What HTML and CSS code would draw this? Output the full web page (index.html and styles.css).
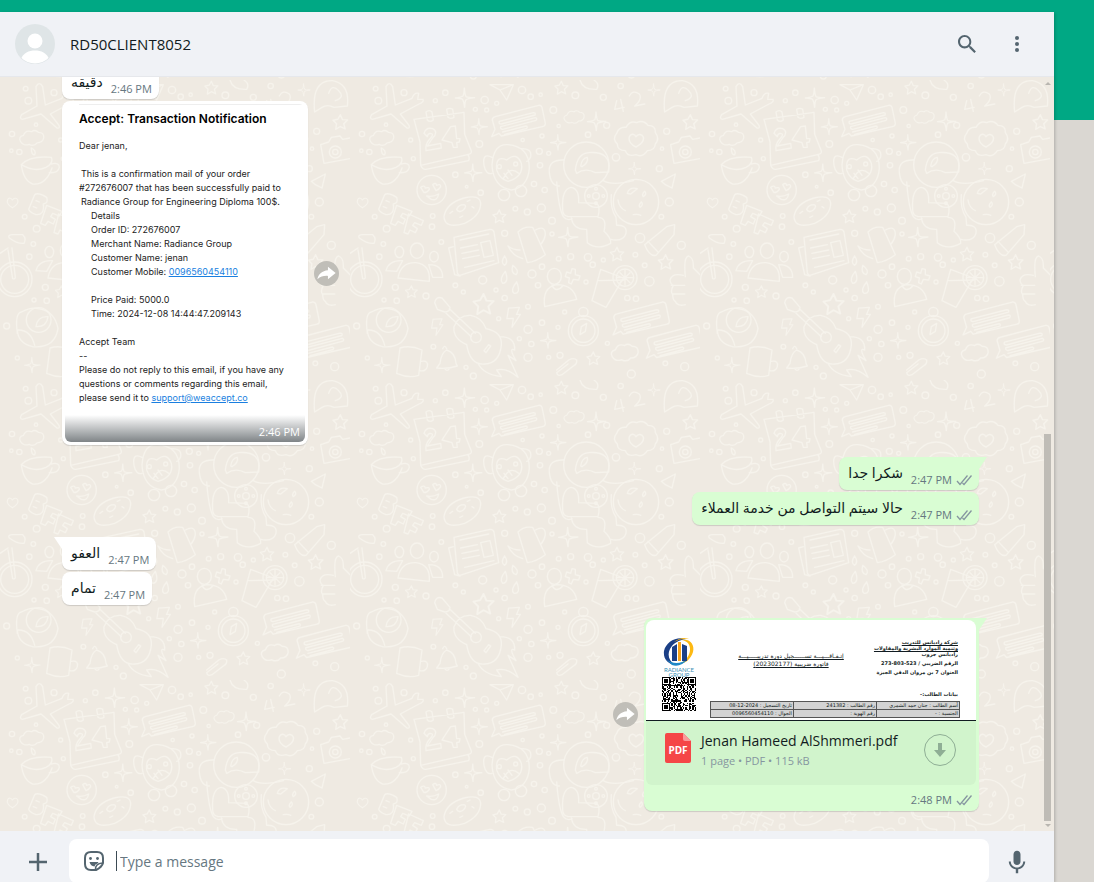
FILE: index.html
```html
<!DOCTYPE html>
<html lang="en">
<head>
  <meta charset="UTF-8" />
  <meta name="viewport" content="width=device-width, initial-scale=1.0"/>
  <title>RD50CLIENT8052</title>

  <link rel="stylesheet" href="styles.css">
</head>
<body>

  <!-- shared icons -->
  <svg class="defs" width="0" height="0" aria-hidden="true">
    <symbol id="ticks" viewBox="0 0 16 12">
      <path d="M1 7l3 3.5L11.500 1.500M6.500 9l1.500 1.500L15.500 1.500" fill="none" stroke="currentColor" stroke-width="1.300"/>
    </symbol>
    <symbol id="forward" viewBox="0 0 26 26">
      <path d="M14.500 6L22.500 12.500L14.500 19V15.500C10 15.200 7 16.200 3.500 19C4.500 13.500 8.500 10 14.500 9.500Z" fill="#fff"/>
    </symbol>
    <symbol id="star" viewBox="0 0 50 50">
      <path d="M24 4l6 14 15 1-11 11 4 15-14-7-13 8 2-16L3 20l14-3z"/>
    </symbol>
    <symbol id="spark" viewBox="0 0 60 60">
      <path d="M28 2q2 22 5 25q5 3 25 3q-22 3-25 6q-3 3-4 22q-3-20-6-23q-3-3-21-4q18-3 22-6q3-3 4-23z"/>
    </symbol>
    <symbol id="heart" viewBox="0 0 50 50">
      <path d="M24 44C10 36 2 25 6 14c4-9 15-7 18 1c5-8 16-9 20 0c4 11-8 22-20 29z"/>
    </symbol>
    <symbol id="note" viewBox="0 0 170 105">
      <path d="M18 38L148 4q8-1 10 6l10 48q0 8-6 9L36 96l-7-8-22 10 10-22-8-28q0-8 9-10zM30 52L132 26q8 0 5 7L36 60q-9 0-6-8zM34 68l104-27q7 2 2 8L40 76q-8-1-6-8zM40 84l70-18q6 2 2 7L46 91"/>
    </symbol>
    <symbol id="cloud" viewBox="0 0 90 60">
      <path d="M10 40q-8-14 9-19Q26 2 45 9q10-8 21 2q18 0 17 17q-3 16-21 16q-10 13-25 5q-18 6-27-9z"/>
    </symbol>
    <symbol id="bolt" viewBox="0 0 50 70">
      <path d="M10 5l34-2-9 22 12 0-26 40 4-28-20 1z"/>
    </symbol>
  </svg>

  <div class="band"></div>

  <main class="app">
    <header class="top">
      <svg class="avatar" viewBox="0 0 40 40" role="img" aria-label="Contact photo">
        <clipPath id="round"><circle cx="20" cy="20" r="19.500"/></clipPath>
        <circle cx="20" cy="20" r="20" fill="#dfe5e7"/>
        <g fill="#fff" clip-path="url(#round)">
          <circle cx="20" cy="17" r="7.500"/>
          <path d="M6 35c2-6 8-8.500 14-8.500s12 2.500 14 8.500q-6 5-14 5t-14-5z"/>
        </g>
      </svg>
      <h1 class="contact">RD50CLIENT8052</h1>
      <button class="icon-btn" type="button" aria-label="Search">
        <svg width="24" height="24" viewBox="0 0 24 24" fill="currentColor"><path d="M15.900 14.300H15L14.700 14c1-1.100 1.600-2.700 1.600-4.300 0-3.700-3-6.700-6.700-6.700S3 6 3 9.700s3 6.700 6.700 6.700c1.600 0 3.200-.6 4.300-1.600l.3.300v.8l5.100 5.100 1.500-1.500-5-5.200zm-6.200 0c-2.600 0-4.600-2.100-4.600-4.600s2.100-4.600 4.600-4.600 4.600 2.100 4.600 4.600-2 4.600-4.600 4.600z"/></svg>
      </button>
      <button class="icon-btn" type="button" aria-label="Menu">
        <svg width="24" height="24" viewBox="0 0 24 24" fill="currentColor"><circle cx="12" cy="6" r="2"/><circle cx="12" cy="12" r="2"/><circle cx="12" cy="18" r="2"/></svg>
      </button>
    </header>

    <section class="chat">
      <svg class="doodles" aria-hidden="true">
        <pattern id="doodle" x="0" y="3" width="350" height="300" patternUnits="userSpaceOnUse" viewBox="0 0 1050 900">
          <g fill="none" stroke="#f6f3ec" stroke-width="4" stroke-linejoin="round" stroke-linecap="round">
            <!-- plane, calendar, cup -->
            <path d="M108 20q10-18 20 0l8 55 50-20q6-18 20-15l-3 18 16 0q4 8-12 14l-56 30 26 34q4 10-6 8l-48-42-56 16q-10-2-2-14l46-26z"/>
            <path d="M192 118L342 97l2 66 20 50q2 8-8 10L212 256l-2-70zM212 256q6 14 16 12l128-26q4-8-2-18M228 96q10-8 18 0l4 24q-10 8-18 0zM290 88q10-6 18 0l4 24q-10 6-18 0z"/>
            <path d="M222 160q6-20 26-14q18 10 0 28l-16 24 40-8 2 14-46 8q-4-20 14-38q12-14-2-14q-8 2-8 10zM276 180l26-40 14-2 4 38 10 0-2 10-8 2 2 14-12 0-4-14z"/>
            <path d="M64 254q26-28 90-22q8 18-16 30q-34 16-74-8zq6 48 34 58q40 4 58-48M154 252q24-6 24 10q-4 18-30 16M94 204q16 8 10 20q-10 2-10-20z"/>
            <!-- smiley, donut, monkey -->
            <circle cx="245" cy="330" r="44"/>
            <path d="M212 322q12-8 14 2q12-4 12 4q-6 10-16 10zM248 314q10-8 12 2q12-6 12 4q-4 8-14 12zM230 348q18 4 36-6q-4 22-22 16z"/>
            <path d="M282 410q6-40 60-56q48-12 50 16q0 38-48 60q-60 18-62-20zM320 388q6-14 22-14q10 4-2 16q-14 10-20-2M300 400l8-6M352 364l8-4M366 380l6 4M330 412l8-4"/>
            <path d="M426 256q4-66 48-62q64 6 64 70q-4 58-54 66q-54-8-58-74zM426 232q-30-16-24 24q6 30 24 24M512 206q34-2 30 24q-6 14-12 14M440 270q-4-46 30-30q30-26 44 10q8 40-40 54q-24-6-34-34M460 296q20-40 46-16M462 280l12 16M474 270l12 16"/>
            <circle cx="448" cy="260" r="6"/><circle cx="497" cy="252" r="6"/><circle cx="462" cy="345" r="17"/><circle cx="513" cy="333" r="17"/>
            <!-- astronaut and moon -->
            <circle cx="709" cy="254" r="68"/>
            <path d="M676 270q6-50 40-52q70-6 60 58l-40 2q-30-16-56 2zM692 258q4-24 20-26q4 16-16 28zM642 240q-48-2-44 38q4 40 30 40M620 306q6 80 20 104q10 14 26 6M638 390q-4-64 26-68q24 4 22 46l54 2q12 10 4 40h-90q-16-4-16-20M664 414q6 36 46 34l2 40q30 24 70 2q2-16-20-36q10-42-18-42M760 302q26 16 90 0M784 344q-4 40 14 68l2 24q32-2 28 24q-8 26-46 18"/>
            <circle cx="738" cy="348" r="34"/><circle cx="738" cy="348" r="10"/><circle cx="738" cy="326" r="4"/><circle cx="760" cy="348" r="4"/><circle cx="738" cy="370" r="4"/><circle cx="716" cy="348" r="4"/>
            <circle cx="858" cy="366" r="68"/><path d="M832 340q4-20 30-14l-20 16zM880 350q-6-6 4-16q8 8-4 16M870 382q-6-6 4-16q8 8-4 16M804 360q4 24 22 32M850 404q16-2 22 2"/>
            <!-- badge, camera, 42 -->
            <path d="M800 160q6-20 28-18q12-22 32-14q20-10 34 8q24 0 22 22q14 18 0 34q-2 20-24 20q-14 22-34 12q-24 8-32-12q-24 0-24-20q-16-16-2-32z"/>
            <use href="#heart" x="832" y="154" width="54" height="54"/>
            <path d="M962 194l24-8 8-14 26-4 8 10 22-4M962 194l10 56 78-14M800 62l-6 26 28-6M812 58l8 36M838 48q10-20 30-6q10 16-14 36l30-6"/>
            <circle cx="1006" cy="216" r="18"/><circle cx="1006" cy="216" r="8"/>
            <!-- BFF, bike, group, newspaper, kettle -->
            <path d="M104 344q10-8 36 8q6 18-10 20q4 34-22 32q-18-6-22-16zM108 362l10 4M100 380l10 4M140 376l46 18-8 14-20-8-6 10 14 8-6 14-16-8-8 12-14-6zM176 402l44 20-6 14-20-8-6 8 14 10-6 12-16-8-6 12-12-4z"/>
            <circle cx="44" cy="598" r="52"/><circle cx="44" cy="598" r="42"/><path d="M28 474q-6-10 10-10h30q12 10 4 26q-20 2-44-16M24 510l14 86q8 2 8-4L36 504M0 520l24-16"/>
            <ellipse cx="148" cy="516" rx="13" ry="17"/><ellipse cx="201" cy="512" rx="20" ry="23"/><ellipse cx="252" cy="530" rx="13" ry="16"/>
            <path d="M144 594q8-48 54-46q44 6 40 56zM108 572q8-32 50-30l-18 32zM236 554q42 0 42 38l-30 0z"/>
            <path d="M312 472l108-24q10 0 12 8l14 92-116 38q-6 0-8-8zM310 500l-14 4 18 80 16 4M330 480l86-18M332 504l50-10M336 520l50-10M338 536l50-10M344 562l88-20M392 488l28-6 10 44-28 6z"/>
            <path d="M504 456q16-18 44-14l38 82q-26 20-54 24zM510 510q-22 0-36-12q14 30 44 38M556 450q30-16 30 14q-2 16-14 30"/>
            <path d="M464 528q-14 20 0 28q12-10 0-28M488 556q-6 24 10 28q12-12-10-28M466 574q-20 24-8 36q20-2 8-36M500 606q-20 24-8 34q22 2 8-34"/>
            <!-- person, glass, thumb, marker -->
            <ellipse cx="613" cy="589" rx="21" ry="24"/><path d="M584 680q-8-58 36-66q50 0 60 44zM606 616q12 24 32 2M752 568l68 26-52 88-42-20zM746 602l76-2M650 576l12 4 4-14 10 2 0 16 14 4-4 12-16-2-6 14-8-4 2-14-12-4z"/>
            <circle cx="825" cy="593" r="36"/><circle cx="825" cy="593" r="26"/><path d="M825 570v46M802 593h46M810 578l30 30M840 578l-30 30"/>
            <path d="M1006 590q-6-60 10-62q16 6 14 36l20 20M1000 586q-34-8-40 14q2 14 10 16q-10 18-2 28q0 16 8 20q6 16 30 10M964 616h40M968 642h36"/>
            <path d="M884 494l66-54 24-6-2 30-54 62q-20 4-34-32M894 484l30 32"/>
            <!-- rose, mug, bell, guitar, compass -->
            <circle cx="116" cy="720" r="37"/><path d="M52 760q-8-60 12-64q30-16 50-10q50 6 60 60q-10 60-76 54q-44-10-46-50q40-2 52 46M108 740q4-32 36-30q-4 32-36 30"/>
            <path d="M150 804q30-10 66 6l-10 76q-30 10-66-6zM214 844q22-4 18 16q-6 16-22 12M260 864l10-14q4-32 20-40q26 8 28 40l4 8q-30 10-62 6M278 806q6-14 12 0M284 866q8 10 14 0"/>
            <path d="M254 668q4-20 22-14l24 28q0 14-16 14l-22-8zM298 686l78 74M288 700l76 70M312 740q14-36 50-34q34 6 46 40q50 10 46 50q-6 54-50 56q-44 4-54-58q-42-18-38-54M402 812l14-18 6 4-14 20zM450 770q46 0 44 40q-20-10 4 32l-24-16 30 66q-34-30-64-22l14 20q-54-6-70-40"/>
            <circle cx="378" cy="772" r="16"/>
            <circle cx="700" cy="752" r="45"/><circle cx="700" cy="752" r="35"/><circle cx="700" cy="696" r="14"/><path d="M690 764l4-24 16-10-4 24z"/>
            <path d="M620 870l36-30q16-8 24 0q2 12-10 18l-34 26q-14 6-16-6l34-26"/>
            <!-- planes, rocket -->
            <path d="M420 14l70 0-20 46-20-30zM450 30l40-16M934 304l42-22-10 42-20-10zM944 96q-10-96 54-94q52 10 44 76l-40 4q-20-10-36 0zM986 40q10-30 30-8q20 20-10 30M690 0q8 30 50 28q10-16-8-28"/>
            <use href="#note" x="418" y="72" width="170" height="105"/><use href="#note" x="776" y="662" width="190" height="110"/><use href="#note" x="876" y="732" width="190" height="110"/>
            <use href="#cloud" x="52" y="146" width="86" height="58"/><use href="#cloud" x="636" y="84" width="72" height="56"/><use href="#cloud" x="776" y="784" width="96" height="70"/>
            <use href="#star" x="612" y="0" width="46" height="46"/><use href="#star" x="426" y="386" width="46" height="46"/><use href="#star" x="366" y="636" width="72" height="72"/><use href="#star" x="164" y="614" width="42" height="42"/><use href="#star" x="778" y="498" width="48" height="48"/><use href="#star" x="922" y="520" width="52" height="52"/><use href="#star" x="708" y="812" width="46" height="46"/><use href="#star" x="996" y="100" width="52" height="52"/>
            <use href="#spark" x="314" y="22" width="62" height="62"/><use href="#spark" x="362" y="114" width="52" height="52"/><use href="#spark" x="342" y="250" width="56" height="56"/><use href="#spark" x="600" y="162" width="50" height="50"/><use href="#spark" x="710" y="94" width="60" height="60"/><use href="#spark" x="624" y="440" width="62" height="62"/><use href="#spark" x="570" y="756" width="50" height="50"/><use href="#spark" x="72" y="830" width="50" height="50"/><use href="#spark" x="834" y="246" width="40" height="40"/><use href="#spark" x="892" y="10" width="40" height="40"/>
            <use href="#heart" x="16" y="348" width="44" height="40"/><use href="#bolt" x="466" y="678" width="48" height="70"/><use href="#bolt" x="238" y="714" width="46" height="56"/>
            <g id="dots"></g>
          </g>
        </pattern>
        <rect width="100%" height="100%" fill="url(#doodle)"/>
      </svg>

      <div class="messages">
        <div class="bubble in">
          <span class="text" dir="rtl" lang="ar">دقيقه</span>
          <span class="time">2:46 PM</span>
        </div>

        <div class="row">
          <div class="bubble in photo">
            <div class="mail">
              <h2>Accept: Transaction Notification</h2>
              <p>Dear jenan,</p>
              <p class="order">This is a confirmation mail of your order<br><span class="outdent">#272676007 that has been successfully paid to</span><br>Radiance Group for Engineering Diploma 100$.</p>
              <p class="details">Details<br>Order ID: 272676007<br>Merchant Name: Radiance Group<br>Customer Name: jenan<br>Customer Mobile: <a href="tel:0096560454110">0096560454110</a></p>
              <p class="details paid">Price Paid: 5000.0<br>Time: 2024-12-08 14:44:47.209143</p>
              <p>Accept Team<br>--<br>Please do not reply to this email, if you have any<br>questions or comments regarding this email,<br>please send it to <a href="mailto:support@weaccept.co">support@weaccept.co</a></p>
              <div class="shade"><span class="time">2:46 PM</span></div>
            </div>
          </div>
          <button class="forward" type="button" aria-label="Forward"><svg width="25" height="25"><use href="#forward"/></svg></button>
        </div>

        <div class="bubble out first">
          <svg class="tail" width="8" height="13" viewBox="0 0 8 13"><path d="M0 0H8L0 12z" fill="#d9fdd3"/></svg>
          <span class="text" dir="rtl" lang="ar">شكرا جدا</span>
          <span class="time">2:47 PM <svg width="16" height="12"><use href="#ticks"/></svg></span>
        </div>
        <div class="bubble out">
          <span class="text" dir="rtl" lang="ar">حالا سيتم التواصل من خدمة العملاء</span>
          <span class="time">2:47 PM <svg width="16" height="12"><use href="#ticks"/></svg></span>
        </div>

        <div class="bubble in first">
          <svg class="tail" width="8" height="13" viewBox="0 0 8 13"><path d="M8 0H0L8 12z" fill="#fff"/></svg>
          <span class="text" dir="rtl" lang="ar">العفو</span>
          <span class="time">2:47 PM</span>
        </div>
        <div class="bubble in">
          <span class="text" dir="rtl" lang="ar">تمام</span>
          <span class="time">2:47 PM</span>
        </div>

        <div class="row end">
          <button class="forward" type="button" aria-label="Forward"><svg width="25" height="25"><use href="#forward"/></svg></button>
          <div class="bubble out file">
            <svg class="tail" width="8" height="13" viewBox="0 0 8 13"><path d="M0 0H8L0 12z" fill="#d9fdd3"/></svg>
            <div class="preview" dir="rtl" lang="ar">
              <div class="sheet">
                <div class="company">
                  <p><u>شركة راديانس للتدريب</u></p>
                  <p><u>وتنمية الموارد البشرية والمقاولات</u></p>
                  <p>راديانس جروب</p>
                  <p class="spaced">الرقم الضريبي / 523-803-273</p>
                  <p class="spaced">العنوان 7 بن مروان الدقي الجيزة</p>
                  <p class="student">بيانات الطالب:-</p>
                </div>
                <div class="agreement">
                  <p>إتـفـاقـــيـــة تســــــجيل دورة تدريبـــــيـــة</p>
                  <p>فاتورة ضريبية (202302177)</p>
                </div>
                <div class="brand" dir="ltr">
                  <svg width="34" height="30" viewBox="0 0 34 30">
                    <path d="M24 2C14-1 4 5 2 14c-1 8 4 13 11 14C7 24 5 18 8 12C11 6 17 3 24 2z" fill="#1b3f86"/>
                    <path d="M20 3c8-2 13 5 11 12c-2 7-8 12-14 12c8-4 11-9 11-15c0-5-3-8-8-9z" fill="#fdb913"/>
                    <path d="M12 5q8-6 15-3q-8-1-15 3z" fill="#fdb913"/>
                    <path d="M4 22q10 8 22 0q-8 9-16 6z" fill="#1e88c7"/>
                    <path d="M10 10l5-3v17h-5zM20 7l5 2v15h-5z" fill="#1b3f86"/>
                    <path d="M16 5h3v19h-3z" fill="#f9a51a"/>
                  </svg>
                  <span>RADIANCE<br>GROUP</span>
                  <svg class="qr" width="34" height="34" viewBox="0 0 29 29" shape-rendering="crispEdges"><path id="qr"/></svg>
                </div>
              </div>
              <table>
                <tr><td>أسم الطالب : جنان حمد الشمري</td><td>رقم الطالب : 241382</td><td>تاريخ التسجيل : <bdi>08-12-2024</bdi></td></tr>
                <tr><td>الجنسية : -</td><td>رقم الهوية :</td><td>الجوال : 0096560454110</td></tr>
              </table>
            </div>
            <div class="doc">
              <svg width="26" height="30" viewBox="0 0 26 30">
                <path d="M2 0h16l8 8v20q0 2-2 2H2q-2 0-2-2V2q0-2 2-2z" fill="#f54647"/>
                <path d="M18 0l8 8h-6q-2 0-2-2z" fill="#fa9b9b"/>
                <text x="13" y="21" class="pdf" text-anchor="middle">PDF</text>
              </svg>
              <div class="doc-info">
                <span class="doc-name">Jenan Hameed AlShmmeri.pdf</span>
                <span class="doc-meta">1 page • PDF • 115 kB</span>
              </div>
              <button class="download" type="button" aria-label="Download">
                <svg width="34" height="34" viewBox="0 0 34 34"><circle cx="17" cy="17" r="15.500" fill="none" stroke="currentColor"/><path d="M15 10h4v7h4l-6 7-6-7h4z" fill="currentColor"/></svg>
              </button>
            </div>
            <span class="time">2:48 PM <svg width="16" height="12"><use href="#ticks"/></svg></span>
          </div>
        </div>
      </div>

      <div class="scrollbar" aria-hidden="true">
        <i class="up"></i>
        <i class="thumb"></i>
        <i class="down"></i>
      </div>
    </section>

    <form class="composer">
      <button class="icon-btn" type="button" aria-label="Attach">
        <svg width="24" height="24" viewBox="0 0 24 24"><path d="M12 3v18M3 12h18" stroke="currentColor" stroke-width="2.500"/></svg>
      </button>
      <div class="field">
        <button class="sticker" type="button" aria-label="Emoji and stickers">
          <svg width="24" height="24" viewBox="0 0 24 24" fill="none" stroke="currentColor" stroke-width="2">
            <path d="M14 21H9q-6 0-6-6V9q0-6 6-6h6q6 0 6 6v5q-1 4-7 7z"/>
            <path d="M13.500 21q-.5-6.500 7-7" stroke-width="1.600"/>
            <path d="M7.500 13h9l-1 1.500q-2.500.500-3 3q-4-.500-5-4.500z" fill="currentColor" stroke="none"/>
            <circle cx="8.500" cy="9.500" r="1.400" fill="currentColor" stroke="none"/><circle cx="15.500" cy="9.500" r="1.400" fill="currentColor" stroke="none"/>
          </svg>
        </button>
        <span class="caret"></span>
        <input type="text" placeholder="Type a message" aria-label="Type a message" />
      </div>
      <button class="icon-btn" type="button" aria-label="Voice message">
        <svg width="24" height="24" viewBox="0 0 24 24" fill="currentColor"><path d="M12 14.900c2 0 3.500-1.500 3.500-3.500v-7C15.500 2.400 14 .8 12 .8S8.500 2.400 8.500 4.400v7c0 2 1.500 3.500 3.500 3.500zm6.200-3.500c0 3.500-2.900 6-6.200 6s-6.200-2.500-6.200-6h-2c0 4 3.200 7.300 7 7.900v3.900h2.400v-3.900c3.900-.6 7-3.900 7-7.900z"/></svg>
      </button>
    </form>
  </main>

  <script>
    // small circles scattered between the doodles: x, y, radius
    const dots = [
      [77,26,7],[162,38,9],[85,62,10],[36,162,8],[58,216,8],[34,212,5],[108,134,5],[182,180,6],[190,236,6],[286,38,8],
      [256,62,6],[404,60,11],[376,88,6],[410,90,6],[440,70,6],[516,30,11],[542,50,8],[572,44,5],[610,90,10],[676,46,10],
      [626,138,5],[714,164,8],[770,136,9],[760,52,9],[812,18,8],[388,192,10],[518,180,5],[576,168,6],[568,214,9],[596,220,6],
      [570,256,8],[798,232,11],[928,266,9],[936,206,5],[950,154,9],[316,284,8],[392,338,8],[350,320,4],[552,312,8],[584,330,8],
      [574,384,12],[532,396,9],[496,386,7],[606,422,10],[464,460,9],[606,462,6],[110,446,10],[74,410,7],[100,492,7],[88,530,8],
      [248,408,7],[246,440,8],[274,486,7],[136,622,9],[228,648,9],[140,662,8],[102,660,6],[20,738,9],[316,616,7],[340,636,6],
      [398,600,12],[438,630,6],[464,654,8],[546,582,12],[564,616,8],[576,560,8],[626,536,7],[662,530,9],[714,532,11],[728,554,8],
      [760,540,6],[870,474,14],[856,524,7],[958,366,12],[934,410,7],[994,496,12],[898,604,14],[832,654,8],[858,656,8],[708,606,6],
      [534,680,7],[534,748,12],[576,728,8],[624,742,6],[544,792,8],[534,832,12],[508,776,6],[630,826,9],[596,832,6],[772,790,6],
      [250,800,7],[348,862,6],[370,888,9],[52,834,6],[844,882,12],[1004,860,12],[946,850,7],[884,556,7],[644,696,6],[446,716,6]
    ];
    document.getElementById("dots").innerHTML = dots
      .map(([x, y, r]) => `<circle cx="${x}" cy="${y}" r="${r}"/>`)
      .join("");

    // QR code on the invoice
    function inFinder(x, y, fx, fy) {
      return x >= fx && x < fx + 7 && y >= fy && y < fy + 7;
    }

    let d = "";
    let seed = 77;
    for (let y = 0; y < 29; y++) {
      for (let x = 0; x < 29; x++) {
        seed = (seed * 1103515245 + 12345) % 2147483648;
        let dark = (seed >> 12) % 2 === 0;
        [[0, 0], [22, 0], [0, 22]].forEach(([fx, fy]) => {
          if (inFinder(x, y, fx, fy)) {
            const ring = Math.max(Math.abs(x - fx - 3), Math.abs(y - fy - 3));
            dark = ring !== 2;
          }
        });
        if (dark) d += `M${x} ${y}h1v1h-1z`;
      }
    }
    document.getElementById("qr").setAttribute("d", d);
  </script>

</body>
</html>
```

FILE: styles.css
```css
* {
  box-sizing: border-box;
}

body {
  margin: 0;
  height: 100vh;
  overflow: hidden;
  background-color: #dad7d2;
  font-family: "Open Sans", "Noto Sans", "DejaVu Sans", sans-serif;
  color: #111b21;
}

h1, h2, p {
  margin: 0;
}

button {
  padding: 0;
  border: none;
  background: none;
  color: inherit;
  cursor: pointer;
}

button svg {
  display: block;
}

.defs {
  position: absolute;
}

.band {
  position: absolute;
  top: 0;
  left: 0;
  right: 0;
  height: 120px;
  background-color: #00a884;
}

.app {
  position: relative;
  display: flex;
  flex-direction: column;
  height: calc(100vh - 12px);
  margin: 12px 40px 0 0;
  background-color: #efeae2;
  box-shadow: 1px 1px 3px rgba(0,0,0,0.2);
}

/* header */
.top {
  display: flex;
  align-items: center;
  height: 65px;
  flex-shrink: 0;
  padding: 0 17px 0 15px;
  background-color: #f0f2f6;
  border-bottom: 1px solid #e6e8ec;
}

.avatar {
  width: 40px;
  height: 40px;
}

.contact {
  flex: 1;
  margin-left: 15px;
  font-size: 15px;
  font-weight: normal;
}

.icon-btn {
  display: grid;
  place-items: center;
  width: 40px;
  height: 40px;
  color: #54656f;
}

.top .icon-btn {
  margin-left: 10px;
}

/* chat */
.chat {
  position: relative;
  flex: 1;
  min-height: 0;
  overflow: hidden;
}

.doodles {
  position: absolute;
  width: 100%;
  height: 100%;
}

.messages {
  position: relative;
  display: flex;
  flex-direction: column;
  justify-content: flex-end;
  align-items: flex-start;
  gap: 2px;
  height: 100%;
  padding: 0 75px 20px 62px;
}

.bubble {
  position: relative;
  display: flex;
  align-items: flex-end;
  gap: 8px;
  min-height: 33px;
  flex-shrink: 0;
  padding: 6px 7px 3px 9px;
  border-radius: 8px;
  box-shadow: 0 1px 1px rgba(11,20,26,0.15);
}

.in {
  background-color: #fff;
}

.out {
  align-self: flex-end;
  background-color: #d9fdd3;
}

.first {
  margin-top: 10px;
}

.in.first {
  border-top-left-radius: 0;
}

.out.first, .file {
  border-top-right-radius: 0;
}

.tail {
  position: absolute;
  top: 0;
}

.in .tail {
  right: 100%;
}

.out .tail {
  left: 100%;
}

.text {
  font-size: 14px;
  line-height: 20px;
  align-self: flex-start;
}

.time {
  display: flex;
  align-items: center;
  gap: 4px;
  font-size: 11px;
  line-height: 14px;
  color: #667781;
}

.time svg {
  color: #8696a0;
}

.row {
  display: flex;
  align-items: center;
  gap: 6px;
  flex-shrink: 0;
}

.row.end {
  align-self: flex-end;
  margin-top: 11px;
}

.forward {
  width: 25px;
  height: 25px;
  border-radius: 50%;
  background-color: #c0beb8;
}

/* screenshot of the payment mail */
.photo {
  padding: 3px;
}

.mail {
  display: flex;
  flex-direction: column;
  gap: 14px;
  width: 240px;
  padding: 0 0 0 14px;
  border-radius: 6px;
  overflow: hidden;
  font-family: Inter, sans-serif;
  font-size: 9px;
  line-height: 14px;
  color: #222;
  white-space: nowrap;
}

.mail h2 {
  margin-bottom: -1px;
  padding-top: 7px;
  border-top: 1px solid #eee;
  font-size: 12px;
  font-weight: 600;
  color: #000;
}

.mail a {
  color: #1a7fe0;
}

.order {
  padding-left: 2px;
}

.outdent {
  margin-left: -2px;
}

.details {
  margin-top: -14px;
  padding-left: 12px;
}

.details.paid {
  margin-top: 0;
}

.shade {
  display: flex;
  justify-content: flex-end;
  align-items: flex-end;
  height: 27px;
  margin: -4px 0 0 -14px;
  padding: 0 5px 3px;
  background: linear-gradient(#fff, #7f8487);
}

.shade .time {
  font-family: "Open Sans", sans-serif;
  color: #fff;
}

/* pdf message */
.file {
  flex-direction: column;
  gap: 0;
  width: 335px;
  padding: 2px 3px 4px 2px;
}

.file > .time {
  margin: 8px 4px 0 0;
}

.preview {
  width: 100%;
  height: 101px;
  padding: 0 16px;
  border-bottom: 1px solid #111b21;
  border-radius: 8px 8px 0 0;
  background-color: #fff;
  overflow: hidden;
  font-family: "DejaVu Sans", sans-serif;
  font-size: 6px;
  line-height: 8px;
  white-space: nowrap;
}

.sheet {
  display: grid;
  grid-template-columns: 1fr 120px 69px;
  align-items: start;
  height: 81px;
  padding-top: 17px;
}

.company {
  padding: 2px 2px 0 0;
  font-size: 5px;
  font-weight: bold;
  line-height: 6px;
}

.spaced {
  margin-top: 3px;
}

.student {
  margin-top: 16px;
}

.agreement {
  padding-top: 15px;
  text-align: center;
  text-decoration: underline;
}

.brand {
  display: flex;
  flex-direction: column;
  align-items: center;
  justify-self: end;
  width: 34px;
  font-family: Lato, sans-serif;
  font-size: 6px;
  line-height: 5px;
  text-align: center;
  color: #3b8fb5;
}

.qr {
  flex-shrink: 0;
}

.preview table {
  width: 250px;
  height: 17px;
  table-layout: fixed;
  border-collapse: collapse;
  background-color: #d3d3d3;
}

.preview td {
  padding: 0 1px;
  border: 1px solid #555;
  font-size: 5px;
  line-height: 7px;
}

.doc {
  display: flex;
  align-items: flex-start;
  width: 100%;
  height: 64px;
  padding: 12px 19px 0 19px;
  border-radius: 0 0 6px 6px;
  background-color: #d1f4cc;
}

.pdf {
  font-size: 10px;
  font-weight: bold;
  fill: #fff;
}

.doc-info {
  display: flex;
  flex-direction: column;
  flex: 1;
  margin: -2px 0 0 10px;
}

.doc-name {
  font-size: 14px;
  line-height: 20px;
}

.doc-meta {
  font-size: 11px;
  line-height: 20px;
  color: #8696a0;
}

.download {
  color: #8fae95;
}

/* scrollbar */
.scrollbar {
  position: absolute;
  top: 0;
  right: 3px;
  bottom: 0;
  display: flex;
  flex-direction: column;
  align-items: center;
  justify-content: space-between;
  width: 7px;
  padding: 5px 0 4px;
}

.up, .down {
  border: 3px solid transparent;
}

.up {
  border-top-width: 0;
  border-bottom-color: #b9b6b0;
}

.down {
  border-bottom-width: 0;
  border-top-color: #b9b6b0;
}

.thumb {
  width: 100%;
  height: 52%;
  margin: auto 0 3px;
  background-color: #bfbcb6;
}

/* composer */
.composer {
  display: flex;
  align-items: flex-start;
  height: 51px;
  flex-shrink: 0;
  padding: 8px 17px 0 18px;
  background-color: #f0f2f6;
  overflow: hidden;
}

.composer .icon-btn {
  height: 46px;
}

.field {
  display: flex;
  align-items: center;
  flex: 1;
  height: 44px;
  margin: 0 8px 0 11px;
  padding: 0 13px;
  border-radius: 8px;
  background-color: #fff;
}

.sticker {
  color: #54656f;
}

.caret {
  width: 1px;
  height: 20px;
  margin: 0 3px 0 10px;
  background-color: #3b4a54;
}

.field input {
  flex: 1;
  padding: 0;
  border: none;
  outline: none;
  font: inherit;
  font-size: 14px;
  color: #111b21;
}

.field input::placeholder {
  color: #667781;
}
```
